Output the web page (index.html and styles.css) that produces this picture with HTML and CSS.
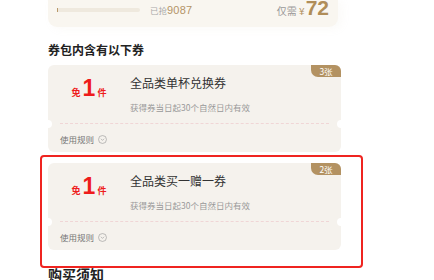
FILE: index.html
```html
<!DOCTYPE html>
<html lang="zh-CN">
<head>
<meta charset="utf-8">
<title>券包</title>
<link rel="stylesheet" href="styles.css">
</head>
<body>
<div class="page">
  <div class="top-card">
    <div class="progress">
      <div class="bar"><span class="fill"></span></div>
      <span class="sold">已抢<b>9087</b></span>
    </div>
    <div class="price">仅需 <span class="yen">¥</span><span class="num">72</span></div>
  </div>

  <h2 class="section-title">券包内含有以下券</h2>

  <div class="coupon">
    <span class="badge">3张</span>
    <div class="coupon-main">
      <div class="benefit"><span class="unit">免</span><span class="count">1</span><span class="unit">件</span></div>
      <div class="info">
        <div class="title">全品类单杯兑换券</div>
        <div class="sub">获得券当日起30个自然日内有效</div>
      </div>
    </div>
    <div class="divider"></div>
    <div class="rules">使用规则
      <svg class="chev" viewBox="0 0 10 10" width="9" height="9"><circle cx="5" cy="5" r="4.4" fill="none" stroke="#999" stroke-width="0.7"/><path d="M3.2 4.2 L5 6 L6.8 4.2" fill="none" stroke="#999" stroke-width="0.7"/></svg>
    </div>
  </div>

  <div class="selected">
    <div class="coupon">
      <span class="badge">2张</span>
      <div class="coupon-main">
        <div class="benefit"><span class="unit">免</span><span class="count">1</span><span class="unit">件</span></div>
        <div class="info">
          <div class="title">全品类买一赠一券</div>
          <div class="sub">获得券当日起30个自然日内有效</div>
        </div>
      </div>
      <div class="divider"></div>
      <div class="rules">使用规则
        <svg class="chev" viewBox="0 0 10 10" width="9" height="9"><circle cx="5" cy="5" r="4.4" fill="none" stroke="#999" stroke-width="0.7"/><path d="M3.2 4.2 L5 6 L6.8 4.2" fill="none" stroke="#999" stroke-width="0.7"/></svg>
      </div>
    </div>
  </div>

  <h2 class="section-title notice">购买须知</h2>
</div>
</body>
</html>
```

FILE: styles.css
```css
* { box-sizing: border-box; }
html, body { margin: 0; padding: 0; background: #fff; }
body {
  font-family: "Noto Sans CJK SC", "Noto Sans", sans-serif;
  color: #333;
  overflow: hidden;
  height: 280px;
}
.page {
  padding-left: 48px;
  width: 341px;
}

/* top card */
.top-card {
  width: 290px;
  height: 27px;
  background: #f9f6f0;
  border-radius: 0 0 9px 9px;
  display: flex;
  align-items: flex-start;
  padding: 0 9px;
  box-shadow: 4px 2px 8px rgba(200, 190, 170, 0.08);
}
.progress {
  display: flex;
  align-items: center;
  height: 12px;
  margin-top: 4px;
  gap: 10px;
}
.bar {
  width: 83px;
  height: 4px;
  background: #efe9de;
  border-radius: 2px;
  display: flex;
}
.fill {
  width: 1px;
  height: 4px;
  background: #b8986a;
}
.sold {
  font-size: 8.5px;
  color: #aaa;
  line-height: 12px;
}
.sold b {
  font-family: "Liberation Sans", Arial, sans-serif;
  font-weight: 400;
  font-size: 11px;
  color: #b49467;
  letter-spacing: 0.2px;
}
.price {
  margin-left: auto;
  font-size: 10px;
  color: #999;
  line-height: 20px;
  margin-top: -2px;
}
.price .yen {
  color: #b49467;
  font-size: 10px;
}
.price .num {
  font-family: "Liberation Sans", Arial, sans-serif;
  font-weight: 700;
  font-size: 21px;
  color: #b08d58;
  margin-left: 1px;
}

/* section title */
.section-title {
  margin: 14px 0 6px;
  font-size: 12px;
  line-height: 18px;
  font-weight: 700;
  color: #222;
}
.section-title.notice {
  font-size: 14px;
  line-height: 20px;
  margin-top: -4px;
}

/* coupon */
.coupon {
  position: relative;
  width: 293px;
  height: 87px;
  background: #f5f2ed;
  border-radius: 6px;
  padding-top: 9px;
}
.coupon::before,
.coupon::after {
  content: "";
  position: absolute;
  top: 55px;
  width: 8px;
  height: 8px;
  border-radius: 50%;
  background: #fff;
}
.coupon::before { left: -4px; }
.coupon::after { right: -4px; }
.badge {
  position: absolute;
  top: 0;
  right: 0;
  width: 30px;
  height: 12px;
  background: #b39262;
  color: #fff;
  font-size: 8.5px;
  line-height: 12px;
  text-align: center;
  border-radius: 0 6px 0 7px;
}
.coupon-main {
  display: flex;
}
.benefit {
  width: 82px;
  display: flex;
  align-items: baseline;
  justify-content: center;
  color: #ee1c1c;
  font-weight: 700;
  padding-top: 1px;
  gap: 2px;
}
.benefit .unit {
  font-size: 9px;
}
.benefit .count {
  font-family: "Liberation Sans", Arial, sans-serif;
  font-size: 23px;
  line-height: 26px;
}
.info .title {
  font-size: 12px;
  line-height: 18px;
  color: #333;
}
.info .sub {
  margin-top: 9px;
  font-size: 8.5px;
  line-height: 12px;
  color: #999;
}
.divider {
  margin: 10px 12px 0;
  border-top: 1px dashed #f0d6d6;
}
.rules {
  display: flex;
  align-items: center;
  gap: 4px;
  margin: 8px 0 0 12px;
  font-size: 8.5px;
  line-height: 14px;
  color: #777;
}
.chev { display: block; }

/* highlighted coupon */
.selected {
  margin: 3px 0 0 -8px;
  width: 323px;
  border: 2px solid #ef2420;
  border-radius: 4px;
  padding: 6px 20px 16px 6px;
}
```
